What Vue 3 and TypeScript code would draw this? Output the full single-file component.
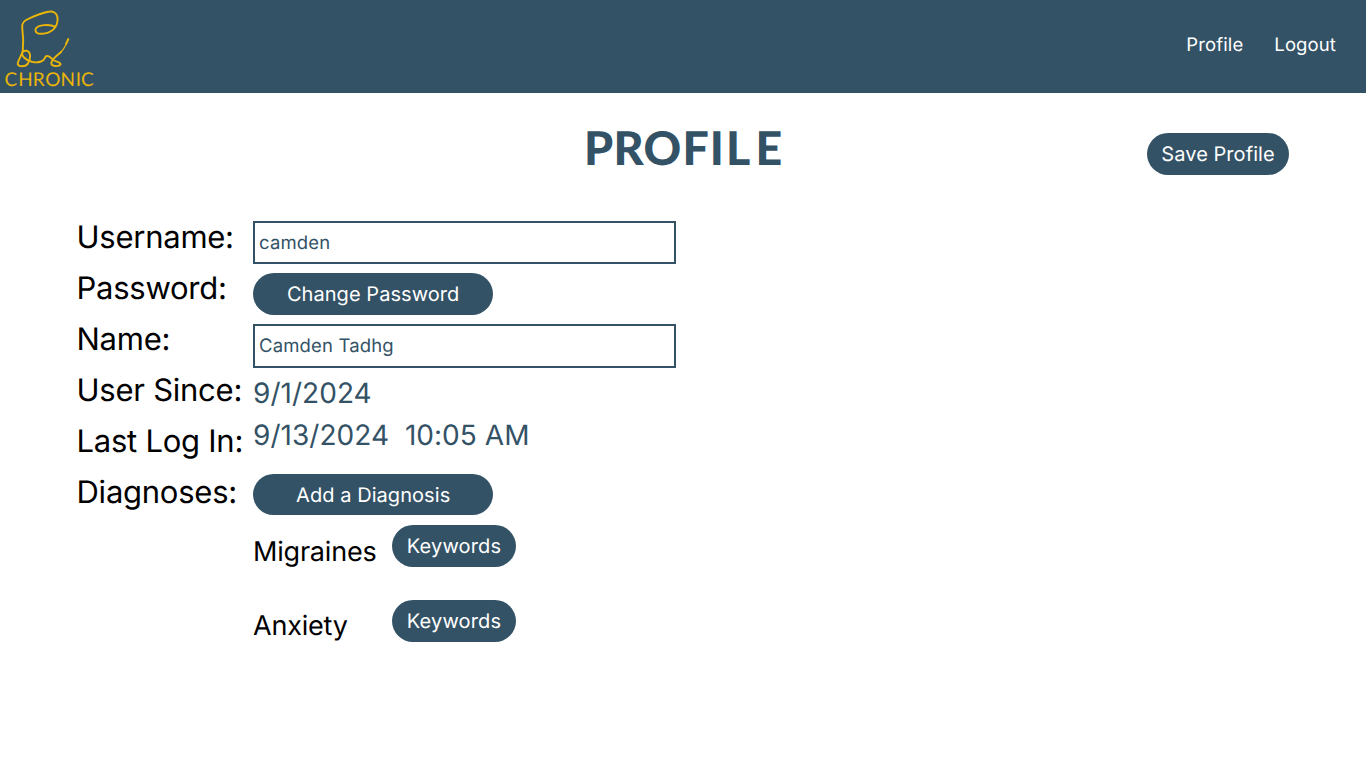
<script setup lang="ts">
import { ref } from 'vue'

const username = ref('camden')
const fullName = ref('Camden Tadhg')
const labels: string[] = ['Username:', 'Password:', 'Name:', 'User Since:', 'Last Log In:', 'Diagnoses:']
const diagnoses: string[] = ['Migraines', 'Anxiety']
</script>

<template>
  <div class="page">
    <header class="topbar">
      <svg class="logo" width="100" height="93" viewBox="0 0 100 93" role="img" aria-label="Chronic">
        <g fill="none" stroke="#e9b509" stroke-width="1.9" stroke-linecap="round" stroke-linejoin="round">
          <path d="M55.500 26.800C49 23.500 38 25 35.800 28.500C34.500 32.500 37.500 34 42 33.700C51 33.500 57.500 28 57.600 19C57.300 12.500 53 10.600 47 12C40 13.500 31 17.500 26 20C21.500 22.500 22 26 22.500 31C23.800 40 23.200 45 22.700 51C22 56 17.500 60 17.700 64C18.500 67 25 67 27.700 64C31 59 31 52 27 50.800C22 50 21 54 23.500 57C28 62 36 63.500 41 61.500C46 60 44 56 47 56C50.500 55.500 51 59 54 60.500C57 62 61 62 60.500 64.500C59 67 51 66.500 51.300 63C52 58.500 57 55.500 61 52" />
          <path d="M61 52C64 49 66.500 44 68.500 39" stroke-width="1.1" />
          <path d="M66 44L68.300 39" />
        </g>
        <text class="wordmark" y="86" x="4.500 18.300 32.700 45.200 60.500 75.800 81">CHRONIC</text>
      </svg>
      <nav class="links">
        <a>Profile</a>
        <a>Logout</a>
      </nav>
    </header>

    <section class="heading">
      <svg class="title" width="210" height="64" viewBox="0 0 210 64" role="img" aria-label="Profile">
        <text y="48.200" x="6 35.500 65.500 104.500 131.700 148 177.500">PROFILE</text>
      </svg>
      <button class="pill save">Save Profile</button>
    </section>

    <main class="form">
      <div class="labels">
        <div v-for="label in labels" :key="label" class="label">{{ label }}</div>
      </div>
      <div class="values">
        <input v-model="username" class="field" type="text" />
        <button class="pill wide">Change Password</button>
        <input v-model="fullName" class="field name" type="text" />
        <div class="date since">9/1/2024</div>
        <div class="date login">9/13/2024&nbsp; 10:05 AM</div>
        <button class="pill wide add">Add a Diagnosis</button>
        <div v-for="diagnosis in diagnoses" :key="diagnosis" class="diagnosis">
          <span class="diagnosis-name">{{ diagnosis }}</span>
          <button class="pill keywords">Keywords</button>
        </div>
      </div>
    </main>
  </div>
</template>

<style>
html,
body {
  margin: 0;
  background: #fff;
}
</style>

<style scoped>
.page {
  height: 768px;
  overflow: hidden;
  background: #fff;
  font-family: Inter, 'Liberation Sans', sans-serif;
  font-weight: 370;
  color: #000;
  text-rendering: geometricPrecision;
}
.topbar {
  display: flex;
  justify-content: space-between;
  height: 93px;
  background: #345266;
}
.logo {
  display: block;
}
.wordmark {
  font: 400 19px Lato, sans-serif;
  fill: #e9b509;
}
.links {
  display: flex;
  gap: 31px;
  padding: 33px 30px 0 0;
  font-size: 18.5px;
  line-height: 24px;
  letter-spacing: 0.12px;
  color: #fff;
}
.heading {
  display: grid;
  grid-template-columns: 1fr auto 1fr;
  height: 119px;
  padding-right: 77px;
  padding-left: 77px;
}
.title {
  grid-column: 2;
  margin-top: 24px;
}
.title text {
  font: 900 46.5px Lato, sans-serif;
  fill: #345266;
}
.pill {
  display: block;
  box-sizing: border-box;
  height: 41.5px;
  padding: 0;
  border: 0;
  border-radius: 21px;
  background: #345266;
  color: #fff;
  font-family: inherit;
  font-size: 20px;
  font-weight: inherit;
  line-height: 24px;
  letter-spacing: 0.06px;
  text-rendering: inherit;
}
.save {
  justify-self: end;
  width: 142px;
  margin-top: 40px;
}
.form {
  display: grid;
  grid-template-columns: 176px 423px;
  padding-left: 77px;
}
.label {
  box-sizing: border-box;
  height: 51px;
  margin-left: -0.5px;
  padding-top: 1px;
  font-size: 31px;
  line-height: 50px;
  letter-spacing: -0.25px;
  white-space: nowrap;
}
.values {
  padding-top: 8.7px;
}
.field {
  display: block;
  box-sizing: border-box;
  width: 423px;
  height: 43.5px;
  margin-bottom: 9px;
  padding: 1px 4px 0;
  border: 2px solid #345266;
  border-radius: 0;
  outline: none;
  background: #fff;
  color: #345266;
  font-family: inherit;
  font-size: 18.5px;
  font-weight: inherit;
  letter-spacing: 0.15px;
  text-rendering: inherit;
}
.name {
  height: 44px;
  margin-bottom: 8.5px;
}
.wide {
  width: 240.3px;
  margin-bottom: 9.2px;
}
.date {
  height: 42px;
  font-size: 28px;
  line-height: 42px;
  letter-spacing: 0.04px;
  color: #345266;
  white-space: nowrap;
}
.since {
  margin-top: -4.4px;
}
.add {
  margin-top: 18px;
  margin-bottom: 9.5px;
}
.diagnosis {
  display: grid;
  grid-template-columns: 139px 124px;
  height: 75px;
}
.keywords {
  height: 42px;
  letter-spacing: 0.15px;
}
.diagnosis-name {
  padding-top: 10px;
  font-size: 27px;
  line-height: 33px;
  letter-spacing: -0.2px;
}
.diagnosis:last-child .diagnosis-name {
  padding-top: 9px;
}
</style>
